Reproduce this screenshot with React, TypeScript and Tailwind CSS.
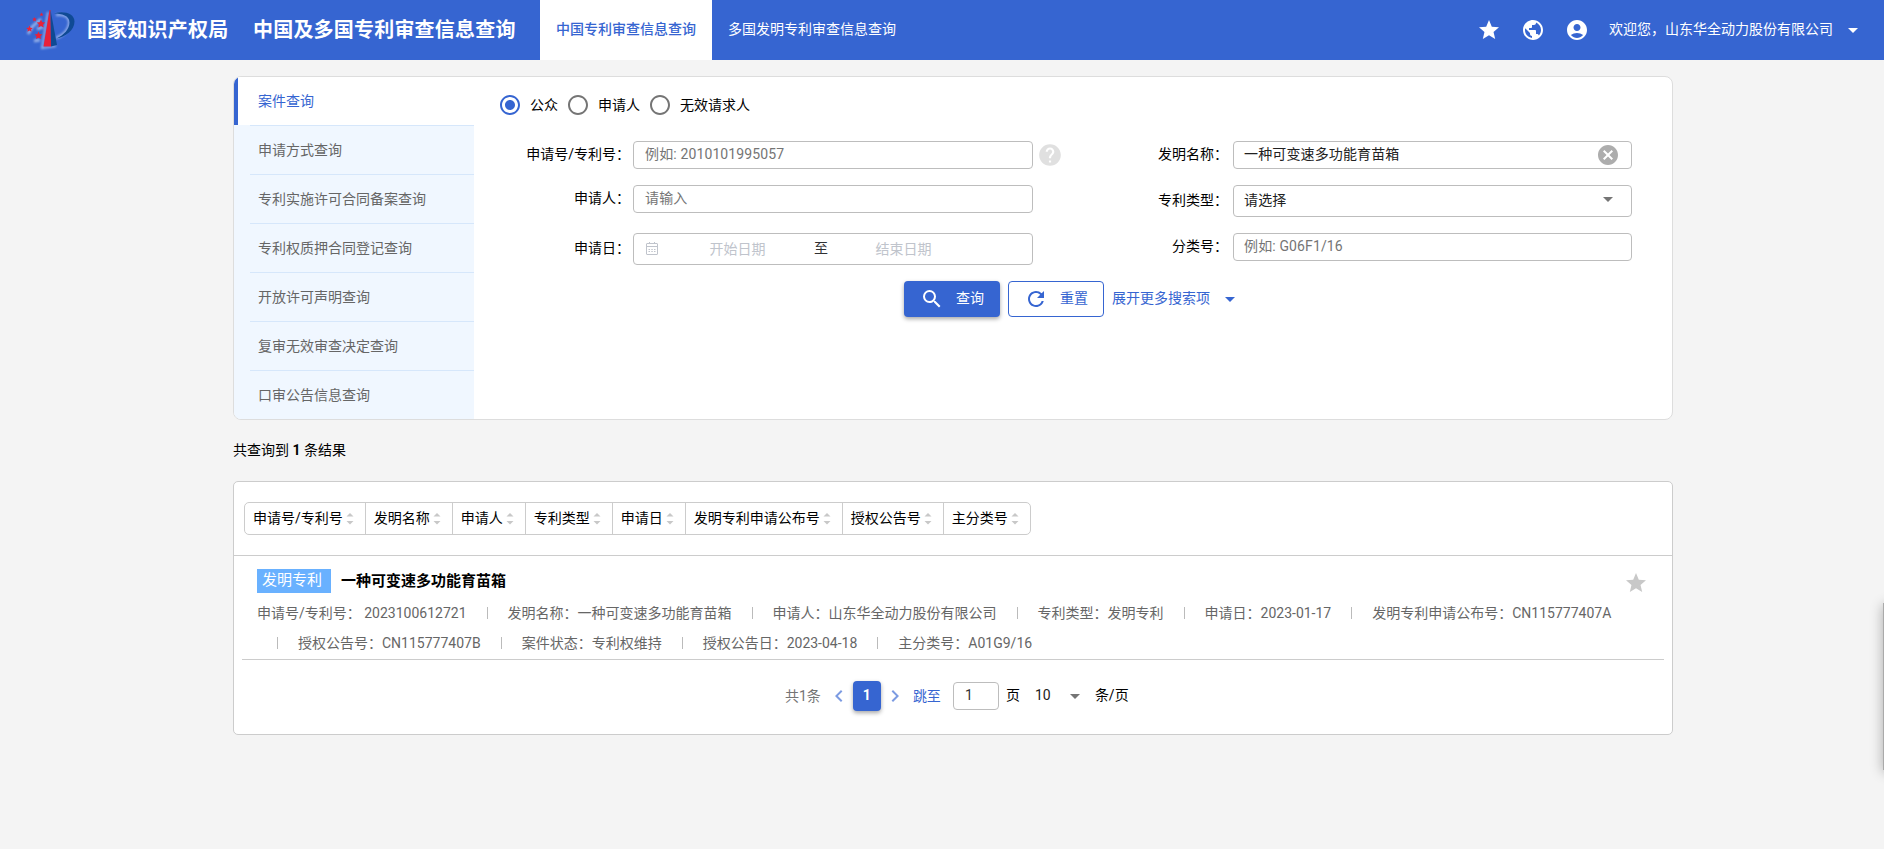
import React, { useState } from "react";
import {
  MdAccountCircle,
  MdArrowDropDown,
  MdCancel,
  MdChevronLeft,
  MdChevronRight,
  MdHelp,
  MdPublic,
  MdRadioButtonChecked,
  MdRadioButtonUnchecked,
  MdRefresh,
  MdSearch,
  MdStar,
} from "react-icons/md";

const menus = [
  "案件查询",
  "申请方式查询",
  "专利实施许可合同备案查询",
  "专利权质押合同登记查询",
  "开放许可声明查询",
  "复审无效审查决定查询",
  "口审公告信息查询",
];

const roles = ["公众", "申请人", "无效请求人"];

const sorts = [
  "申请号/专利号",
  "发明名称",
  "申请人",
  "专利类型",
  "申请日",
  "发明专利申请公布号",
  "授权公告号",
  "主分类号",
];

const firstLine = [
  "申请号/专利号： 2023100612721",
  "发明名称：一种可变速多功能育苗箱",
  "申请人：山东华全动力股份有限公司",
  "专利类型：发明专利",
  "申请日：2023-01-17",
  "发明专利申请公布号：CN115777407A",
];

const secondLine = [
  "授权公告号：CN115777407B",
  "案件状态：专利权维持",
  "授权公告日：2023-04-18",
  "主分类号：A01G9/16",
];

const Logo: React.FC = () => (
  <svg width="60" height="50" viewBox="0 0 60 50" className="shrink-0">
    <defs>
      <filter id="glow" x="-20%" y="-20%" width="140%" height="140%">
        <feGaussianBlur stdDeviation="1" />
      </filter>
    </defs>
    <g filter="url(#glow)" opacity="0.65" fill="none" stroke="#c5d6f5">
      <path d="M28 7 L22 43 L36 41" strokeWidth="2" />
      <path d="M36 10 C55 7 52 28 36 33" strokeWidth="2.5" />
      <path d="M8 29 L12 22 L21 14 M14 36 L20 35 M17 24 L23 22" strokeWidth="3" />
    </g>
    <path d="M29.500 5 L23.500 41.500 H31 L30.500 5 Z" fill="#e8213a" />
    <path d="M30.500 5 L31 41.500 L37 40 Z" fill="#0f4a94" />
    <path
      d="M34 8.500 C43 5.500 54.500 8 54.500 16.500 C54.500 25.500 45 32 36.500 33.500 C44 30 49.500 24 49.500 17.500 C49.500 10.500 42 8.500 34 8.500 Z"
      fill="#0f4a94"
    />
    <g fill="#e8213a">
      <path d="M21 14.500l1.300 2.700 3 .3-2.200 2 .6 3-2.700-1.500-2.700 1.500.6-3-2.200-2 3-.3z" />
      <path d="M18.500 26.500l1.200 2.600 2.800.3-2.100 1.900.6 2.800-2.500-1.400-2.500 1.400.6-2.800-2.100-1.900 2.800-.3z" />
      <path d="M9.500 20.500l1 2.200 2.300.2-1.700 1.600.5 2.300-2.100-1.200-2.100 1.200.5-2.300-1.700-1.600 2.300-.2z" />
      <path d="M14.500 12l.7 1.500 1.600.2-1.200 1.100.3 1.600-1.400-.8-1.400.8.3-1.600-1.200-1.100 1.600-.2z" />
      <path d="M21.500 7.500l.6 1.300 1.300.1-1 .9.3 1.400-1.200-.7-1.200.7.3-1.400-1-.9 1.300-.1z" />
    </g>
  </svg>
);

const CalendarIcon: React.FC = () => (
  <svg width="14" height="14" viewBox="0 0 14 14" fill="none" stroke="#c0c4cc">
    <rect x="1.500" y="1.500" width="11" height="11" rx="0.5" />
    <path d="M1.500 4.500h11M4.500 0v2M9.500 0v2" />
    <path d="M3.500 7.500h1.500M6.300 7.500h1.500M9 7.500h1.500M3.500 9.500h1.500M6.300 9.500h1.500M9 9.500h1.500" />
  </svg>
);

const SortIcon: React.FC = () => (
  <svg width="14" height="14" viewBox="0 0 14 14" fill="#c8c8c8">
    <path d="M7 1 L10.500 4.500 H3.500 Z" />
    <path d="M7 12.500 L3.500 9 H10.500 Z" />
  </svg>
);

const Separator: React.FC = () => (
  <i className="mx-5 mb-px h-3 w-px shrink-0 bg-[#bbb]" />
);

const Header: React.FC = () => (
  <header className="flex h-[60px] items-center bg-[#3665d1] text-white">
    <div className="flex h-full w-[540px] items-center pl-5 text-xl font-bold whitespace-nowrap">
      <Logo />
      <span className="ml-[7px] w-[166px] tracking-[0.2px]">国家知识产权局</span>
      <span className="tracking-[0.2px]">中国及多国专利审查信息查询</span>
    </div>
    <div className="flex h-full items-center bg-white px-4 pb-0.5 font-medium text-[#3665d1]">
      中国专利审查信息查询
    </div>
    <div className="px-4 pb-0.5">多国发明专利审查信息查询</div>
    <div className="ml-auto flex items-center pr-[19px]">
      <MdStar size={24} />
      <MdPublic size={24} className="ml-5" />
      <MdAccountCircle size={24} className="ml-5" />
      <span className="ml-5 pb-0.5">欢迎您，山东华全动力股份有限公司</span>
      <MdArrowDropDown size={24} className="ml-2" />
    </div>
  </header>
);

const SearchForm: React.FC = () => {
  const [role, setRole] = useState<string>("公众");
  return (
    <div className="flex-1 pt-[18px] text-black">
      <div className="ml-[26px] flex h-5 items-center gap-2.5">
        {roles.map((item) => (
          <label
            key={item}
            className="flex items-center gap-2.5"
            onClick={() => setRole(item)}
          >
            {role === item ? (
              <MdRadioButtonChecked size={24} className="-m-0.5 text-[#3665d1]" />
            ) : (
              <MdRadioButtonUnchecked size={24} className="-m-0.5 text-[#757575]" />
            )}
            {item}
          </label>
        ))}
      </div>
      <div className="mt-[26px] flex">
        <div className="flex w-[600px] flex-col gap-4">
          <div className="flex h-7 items-center">
            <span className="w-[156px] pb-0.5 text-right">申请号/专利号：</span>
            <div className="ml-[3px] flex h-7 w-[400px] items-center rounded border border-[#bdbdbd] pb-0.5 pl-[11px] tracking-[0.13px] text-[#757575]">
              例如: 2010101995057
            </div>
            <MdHelp size={26} className="ml-1 text-[#e0e0e0]" />
          </div>
          <div className="flex h-8 items-start">
            <span className="w-[156px] pt-[3px] text-right">申请人：</span>
            <div className="ml-[3px] flex h-7 w-[400px] items-center rounded border border-[#bdbdbd] pb-0.5 pl-[11px] tracking-[0.13px] text-[#757575]">
              请输入
            </div>
          </div>
          <div className="flex h-8 items-center">
            <span className="w-[156px] pb-0.5 text-right">申请日：</span>
            <div className="ml-[3px] flex h-8 w-[400px] items-center rounded border border-[#bdbdbd] pl-[11px] text-[#c0c4cc]">
              <CalendarIcon />
              <span className="w-[155px] pl-0.5 text-center">开始日期</span>
              <span className="w-[14px] pb-0.5 text-[#303133]">至</span>
              <span className="w-[150px] pl-px text-center">结束日期</span>
            </div>
          </div>
        </div>
        <div className="flex flex-col gap-4">
          <div className="flex h-7 items-center">
            <span className="w-[154px] pb-0.5 text-right">发明名称：</span>
            <div className="ml-[5px] flex h-7 w-[399px] items-center justify-between rounded border border-[#bdbdbd] pr-[11px] pl-2.5 tracking-[0.13px] text-[#212121]">
              <span className="pb-0.5">一种可变速多功能育苗箱</span>
              <MdCancel size={24} className="text-[#adadad]" />
            </div>
          </div>
          <div className="flex h-8 items-center">
            <span className="w-[154px] pb-0.5 text-right">专利类型：</span>
            <div className="ml-[5px] flex h-8 w-[399px] items-center justify-between rounded border border-[#bdbdbd] pr-[11px] pb-1 pl-2.5 tracking-[0.13px] text-[#212121]">
              <span className="pt-0.5">请选择</span>
              <MdArrowDropDown size={24} className="text-[#757575]" />
            </div>
          </div>
          <div className="flex h-7 items-center">
            <span className="w-[154px] pb-0.5 text-right">分类号：</span>
            <div className="ml-[5px] flex h-7 w-[399px] items-center rounded border border-[#bdbdbd] pb-0.5 pl-2.5 tracking-[0.13px] text-[#757575]">
              例如: G06F1/16
            </div>
          </div>
        </div>
      </div>
      <div className="mt-4 ml-[430px] flex items-center text-[#3665d1]">
        <button className="flex h-9 w-24 items-center rounded bg-[#3665d1] pl-4 text-white shadow-[0_2px_4px_rgba(0,0,0,0.35)]">
          <MdSearch size={24} />
          <span className="ml-3 pb-0.5">查询</span>
        </button>
        <button className="ml-2 flex h-9 w-24 items-center rounded border border-[#3665d1] pl-[15px]">
          <MdRefresh size={24} />
          <span className="ml-3 pb-0.5">重置</span>
        </button>
        <span className="ml-2 pb-0.5">展开更多搜索项</span>
        <MdArrowDropDown size={24} className="ml-2" />
      </div>
    </div>
  );
};

const ResultCard: React.FC = () => (
  <section className="h-[254px] rounded-[5px] border border-[#ccc] bg-white">
    <div className="h-[74px] border-b border-[#ccc] pt-5 pl-2.5">
      <ul className="inline-flex h-[33px] rounded-[5px] border border-[#ccc] text-black">
        {sorts.map((item) => (
          <li
            key={item}
            className="flex items-center border-r border-[#ccc] px-2 last:border-r-0"
          >
            <span className="pb-0.5">{item}</span>
            <SortIcon />
          </li>
        ))}
      </ul>
    </div>
    <div className="mx-2 h-[104px] border-b border-[#ccc] pt-[13px] pl-[15px] text-[#666]">
      <div className="flex h-6 items-center text-[15px] leading-6">
        <span className="h-6 w-[74px] bg-[#69b1ff] pl-[5px] leading-[23px] text-white">
          发明专利
        </span>
        <b className="ml-2.5 text-black">一种可变速多功能育苗箱</b>
        <MdStar size={24} className="mt-1 mr-4 ml-auto text-[#c8c8c8]" />
      </div>
      <div className="mt-[5px] flex h-[30px] items-center whitespace-pre">
        {firstLine.map((item, index) => (
          <React.Fragment key={item}>
            {index > 0 && <Separator />}
            {item}
          </React.Fragment>
        ))}
      </div>
      <div className="flex h-[30px] items-center">
        {secondLine.map((item) => (
          <React.Fragment key={item}>
            <Separator />
            {item}
          </React.Fragment>
        ))}
      </div>
    </div>
    <div className="mt-[21px] ml-[551px] flex h-[30px] items-center text-black">
      <span className="text-[#757575]">共1条</span>
      <MdChevronLeft size={24} className="ml-1.5 text-[#7c9be2]" />
      <span className="ml-0.5 h-[30px] w-7 rounded bg-[#3665d1] text-center leading-7 font-bold text-white shadow-[0_2px_4px_rgba(0,0,0,0.35)]">
        1
      </span>
      <MdChevronRight size={24} className="ml-0.5 text-[#7c9be2]" />
      <span className="ml-1.5 text-[#3665d1]">跳至</span>
      <span className="ml-3 h-7 w-[46px] rounded border border-[#bdbdbd] pl-[11px] leading-[25px] text-[#333]">
        1
      </span>
      <span className="ml-[7px] pb-0.5">页</span>
      <span className="ml-[15px] pb-0.5 text-[#212121] tracking-[0.13px]">10</span>
      <MdArrowDropDown size={24} className="ml-3 text-[#757575]" />
      <span className="ml-2 pb-0.5">条/页</span>
    </div>
  </section>
);

const App: React.FC = () => {
  const [active, setActive] = useState<string>("案件查询");
  return (
    <div className="relative h-[849px] w-[1884px] overflow-hidden bg-[#f4f4f4] font-[Roboto,'Noto_Sans_CJK_SC',sans-serif] text-sm">
      <Header />
      <main className="mt-4 ml-[233px] w-[1440px]">
        <section className="flex h-[344px] overflow-hidden rounded-lg border border-[#ddd] bg-white">
          <ul className="w-60 bg-[#f0f7ff] text-[#666]">
            {menus.map((item) => (
              <li key={item} onClick={() => setActive(item)}>
                <div
                  className={
                    active === item
                      ? "flex h-12 items-center border-l-4 border-[#3665d1] bg-white pl-5 text-[#3665d1]"
                      : "flex h-12 items-center pl-6"
                  }
                >
                  {item}
                </div>
                <div className="ml-4 h-px bg-[#d6e7fb]" />
              </li>
            ))}
          </ul>
          <SearchForm />
        </section>
        <p className="mt-5 mb-[21px] h-5 text-black">
          共查询到 <b>1</b> 条结果
        </p>
        <ResultCard />
      </main>
      {/* drawer parked off the right edge */}
      <div className="absolute top-[603px] left-[1883px] h-[167px] w-10 bg-[#aaa] shadow-[0_2px_12px_rgba(0,0,0,0.3)]" />
    </div>
  );
};

export default App;
